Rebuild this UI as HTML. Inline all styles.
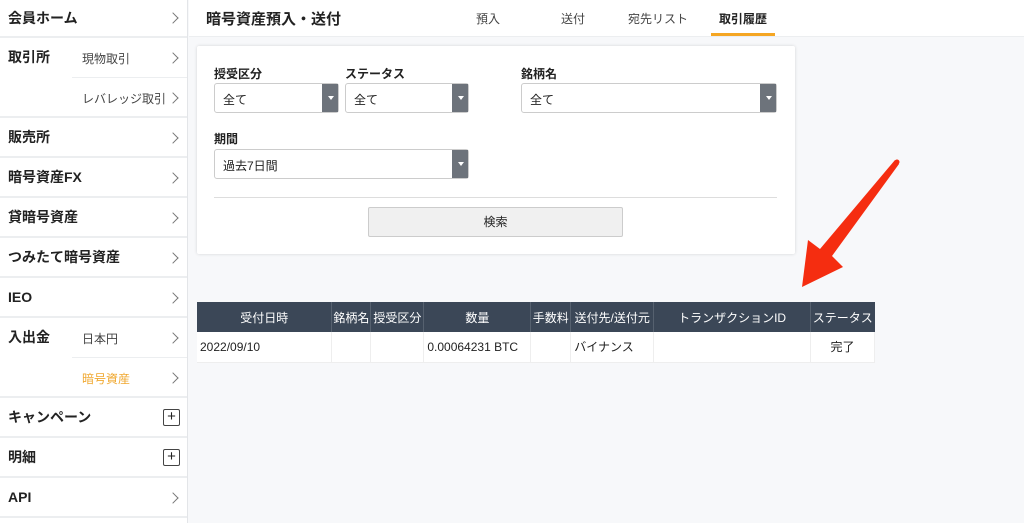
<!DOCTYPE html>
<html><head><meta charset="utf-8"><style>
*{margin:0;padding:0;box-sizing:border-box}
body{width:1024px;height:523px;overflow:hidden;background:#f7f8fa;font-family:"Liberation Sans","Noto Sans CJK JP",sans-serif;color:#222;position:relative}
.side{position:absolute;left:0;top:0;width:188px;height:523px;background:#fff;border-right:1px solid #e3e5e8}
.r{position:absolute;left:0;width:187px;border-bottom:2px solid #eceef0;font-size:14px;font-weight:bold}
.r .t{position:absolute;left:8px;top:0;height:38px;line-height:38px}
.chev{position:absolute;right:10px;width:8px;height:8px;border-top:1px solid #777;border-right:1px solid #777;transform:rotate(45deg)}
.sub{position:absolute;left:72px;width:115px;height:40px;font-size:12px;font-weight:normal;color:#444}
.plus{position:absolute;right:7px;width:17px;height:17px;border:1px solid #444;border-radius:2px;font-size:15px;line-height:14px;text-align:center;font-weight:normal}
.hdr{position:absolute;left:189px;top:0;right:0;height:37px;background:#fff;border-bottom:1px solid #eceef0}
.tab{position:absolute;top:10px;font-size:12px;color:#444}
.card{position:absolute;left:197px;top:46px;width:598px;height:208px;background:#fff;box-shadow:0 0 3px rgba(0,0,0,.15);border-radius:2px}
.lb{position:absolute;font-size:12px;font-weight:bold}
.sel{position:absolute;height:30px;border:1px solid #ccc;border-radius:3px;background:#fff;font-size:12px;padding:7px 8px}
.sel:after{content:"";position:absolute;right:0;top:0;width:16px;height:28px;background:#6d737b}
.sel i{position:absolute;right:4px;top:12px;width:0;height:0;border-left:3.5px solid transparent;border-right:3.5px solid transparent;border-top:4px solid #fff;z-index:2}
table{position:absolute;left:197px;top:302px;border-collapse:collapse;font-size:12px;width:678px}
th{background:#3b4757;color:#fff;font-weight:normal;height:30px;border-right:1px solid #56616f;text-align:center;padding:0}
td{background:#fff;height:30px;border-right:1px solid #eee;border-bottom:1px solid #eee;padding:0 3px;color:#222}
</style></head><body>
<div class="side">
<div class="r" style="top:0;height:38px"><span class="t" style="height:36px;line-height:36px">会員ホーム</span><i class="chev" style="top:14px"></i></div>
<div class="r" style="top:38px;height:80px"><span class="t">取引所</span>
<div class="sub" style="top:0;border-bottom:1px solid #eceef0"><span style="position:absolute;left:10px;top:12px">現物取引</span><i class="chev" style="top:16px"></i></div>
<div class="sub" style="top:40px"><span style="position:absolute;left:10px;top:12px">レバレッジ取引</span><i class="chev" style="top:16px"></i></div></div>
<div class="r" style="top:118px;height:40px"><span class="t">販売所</span><i class="chev" style="top:16px"></i></div>
<div class="r" style="top:158px;height:40px"><span class="t">暗号資産FX</span><i class="chev" style="top:16px"></i></div>
<div class="r" style="top:198px;height:40px"><span class="t">貸暗号資産</span><i class="chev" style="top:16px"></i></div>
<div class="r" style="top:238px;height:40px"><span class="t">つみたて暗号資産</span><i class="chev" style="top:16px"></i></div>
<div class="r" style="top:278px;height:40px"><span class="t">IEO</span><i class="chev" style="top:16px"></i></div>
<div class="r" style="top:318px;height:80px"><span class="t">入出金</span>
<div class="sub" style="top:0;border-bottom:1px solid #eceef0"><span style="position:absolute;left:10px;top:12px">日本円</span><i class="chev" style="top:16px"></i></div>
<div class="sub" style="top:40px"><span style="position:absolute;left:10px;top:12px;color:#f0a830">暗号資産</span><i class="chev" style="top:16px"></i></div></div>
<div class="r" style="top:398px;height:40px"><span class="t">キャンペーン</span><span class="plus" style="top:11px">+</span></div>
<div class="r" style="top:438px;height:40px"><span class="t">明細</span><span class="plus" style="top:11px">+</span></div>
<div class="r" style="top:478px;height:40px"><span class="t">API</span><i class="chev" style="top:16px"></i></div>
</div>
<div class="hdr">
<div style="position:absolute;left:17px;top:8px;font-size:15px;font-weight:bold">暗号資産預入・送付</div>
<span class="tab" style="left:287px">預入</span>
<span class="tab" style="left:372px">送付</span>
<span class="tab" style="left:439px">宛先リスト</span>
<span class="tab" style="left:530px;font-weight:bold;color:#222">取引履歴</span>
<div style="position:absolute;left:522px;top:33px;width:64px;height:3px;background:#f5a623"></div>
</div>
<div class="card">
<span class="lb" style="left:17px;top:19px">授受区分</span>
<span class="lb" style="left:148px;top:19px">ステータス</span>
<span class="lb" style="left:324px;top:19px">銘柄名</span>
<div class="sel" style="left:17px;top:37px;width:125px">全て<i></i></div>
<div class="sel" style="left:148px;top:37px;width:124px">全て<i></i></div>
<div class="sel" style="left:324px;top:37px;width:256px">全て<i></i></div>
<span class="lb" style="left:17px;top:84px">期間</span>
<div class="sel" style="left:17px;top:103px;width:255px">過去7日間<i></i></div>
<div style="position:absolute;left:17px;top:151px;width:563px;height:1px;background:#ddd"></div>
<div style="position:absolute;left:171px;top:161px;width:255px;height:30px;background:#f0f0f0;border:1px solid #ccc;border-radius:2px;font-size:12px;text-align:center;line-height:28px">検索</div>
</div>
<table>
<tr><th style="width:135px">受付日時</th><th style="width:39px">銘柄名</th><th style="width:53px">授受区分</th><th style="width:107px">数量</th><th style="width:40px">手数料</th><th style="width:83px">送付先/送付元</th><th style="width:157px">トランザクションID</th><th style="width:64px;border-right:0">ステータス</th></tr>
<tr><td>2022/09/10</td><td></td><td></td><td>0.00064231 BTC</td><td></td><td>バイナンス</td><td></td><td style="text-align:center">完了</td></tr>
</table>
<svg style="position:absolute;left:0;top:0" width="1024" height="523">
<circle cx="897" cy="162" r="2.5" fill="#f52d10"/>
<polygon points="895,160 899,164 832,256 843,267 802,287 808,240 820,249" fill="#f52d10"/>
</svg>
</body></html>
